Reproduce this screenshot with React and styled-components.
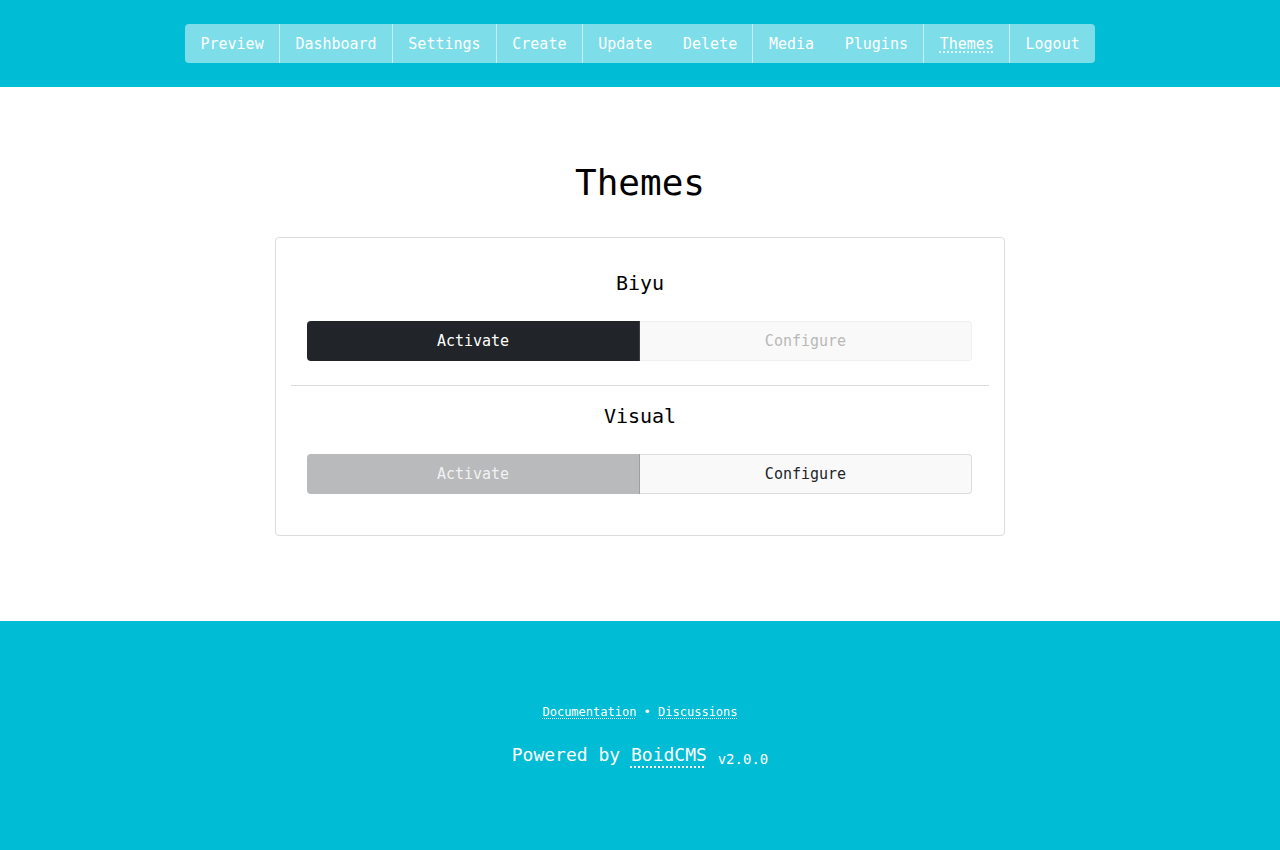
import React from 'react';
import styled, { createGlobalStyle } from 'styled-components';

const GlobalStyle = createGlobalStyle`
  html, body {
    margin: 0;
    padding: 0;
    background: #ffffff;
    font-family: "DejaVu Sans Mono", "Liberation Mono", monospace;
  }
`;

const navGroups = [
  ['Preview'],
  ['Dashboard'],
  ['Settings'],
  ['Create'],
  ['Update', 'Delete'],
  ['Media', 'Plugins'],
  ['Themes'],
  ['Logout'],
];

const themes = [
  { name: 'Biyu', active: true },
  { name: 'Visual', active: false },
];

function App() {
  return (
    <>
      <GlobalStyle />
      <Header>
        <Nav>
          {navGroups.map((group, i) => (
            <NavGroup key={i} $last={i === navGroups.length - 1}>
              {group.map((item) => (
                <NavLink key={item} href="#" $current={item === 'Themes'}>
                  {item}
                </NavLink>
              ))}
            </NavGroup>
          ))}
        </Nav>
      </Header>
      <Main>
        <Title>Themes</Title>
        <Card>
          {themes.map((theme, i) => (
            <React.Fragment key={theme.name}>
              {i > 0 && <Divider />}
              <ThemeItem>
                <ThemeName>{theme.name}</ThemeName>
                <ButtonGroup>
                  <ActivateButton $disabled={!theme.active}>Activate</ActivateButton>
                  <ConfigureButton $disabled={theme.active}>Configure</ConfigureButton>
                </ButtonGroup>
              </ThemeItem>
            </React.Fragment>
          ))}
        </Card>
      </Main>
      <Footer>
        <FooterLinks>
          <FooterLink href="#">Documentation</FooterLink>
          <span> • </span>
          <FooterLink href="#">Discussions</FooterLink>
        </FooterLinks>
        <Powered>
          Powered by <PoweredLink href="#">BoidCMS</PoweredLink> <Version>v2.0.0</Version>
        </Powered>
      </Footer>
    </>
  );
}

export default App;

const Header = styled.header`
  background: #00bcd4;
  padding: 24px 0;
  display: flex;
  justify-content: center;
`;

const Nav = styled.nav`
  display: flex;
  background: rgba(255, 255, 255, 0.49);
  border-radius: 4px;
  height: 39px;
`;

const NavGroup = styled.div`
  display: flex;
  border-right: ${({ $last }) => ($last ? 'none' : '1px solid rgba(255, 255, 255, 0.55)')};
`;

const NavLink = styled.a`
  display: flex;
  align-items: center;
  padding: 0 15.25px 0 15.45px;
  color: #ffffff;
  font-size: 15px;
  text-decoration: ${({ $current }) => ($current ? 'underline dotted' : 'none')};
  text-underline-offset: 3px;
`;

const Main = styled.main`
  padding: 74px 0 85px;
  display: flex;
  flex-direction: column;
  align-items: center;
`;

const Title = styled.h1`
  margin: 0 0 32px;
  font-size: 36px;
  font-weight: 400;
  line-height: 44px;
  color: #000000;
`;

const Card = styled.div`
  width: 730px;
  box-sizing: border-box;
  border: 1px solid #dcdcdc;
  border-radius: 4px;
  padding: 15px 15px 17px;
`;

const Divider = styled.hr`
  margin: 0;
  border: none;
  border-top: 1px solid #dcdcdc;
`;

const ThemeItem = styled.div`
  padding: 18px 16px 24px 16px;
  display: flex;
  flex-direction: column;
  align-items: stretch;
`;

const ThemeName = styled.h3`
  margin: 0 0 26px;
  font-size: 20px;
  font-weight: 400;
  line-height: 24px;
  text-align: center;
  color: #000000;
`;

const ButtonGroup = styled.div`
  display: grid;
  grid-template-columns: 333px 332px;
  height: 40px;
`;

const BaseButton = styled.button`
  font-family: "DejaVu Sans Mono", "Liberation Mono", monospace;
  font-size: 15px;
  box-sizing: border-box;
  margin: 0;
  cursor: pointer;
`;

const ActivateButton = styled(BaseButton)`
  background: ${({ $disabled }) => ($disabled ? '#b9babc' : '#212529')};
  color: ${({ $disabled }) => ($disabled ? '#f2f2f2' : '#ffffff')};
  border: none;
  border-right: 1px solid ${({ $disabled }) => ($disabled ? '#9d9ea0' : '#3a3e42')};
  border-radius: 4px 0 0 4px;
`;

const ConfigureButton = styled(BaseButton)`
  background: #f9f9f9;
  color: ${({ $disabled }) => ($disabled ? '#b8b8b8' : '#212529')};
  border: 1px solid ${({ $disabled }) => ($disabled ? '#f0f0f0' : '#dcdcdc')};
  border-left: none;
  border-radius: 0 4px 4px 0;
`;

const Footer = styled.footer`
  background: #00bcd4;
  color: #ffffff;
  padding: 83px 0 80px;
  display: flex;
  flex-direction: column;
  align-items: center;
  min-height: 229px;
  box-sizing: border-box;
`;

const FooterLinks = styled.div`
  font-size: 12px;
  line-height: 16px;
`;

const FooterLink = styled.a`
  color: #ffffff;
  text-decoration: underline dotted;
  text-underline-offset: 2px;
`;

const Powered = styled.p`
  margin: 24px 0 0;
  font-size: 18px;
  line-height: 22px;
`;

const PoweredLink = styled.a`
  color: #ffffff;
  text-decoration: underline dotted;
  text-underline-offset: 6px;
`;

const Version = styled.small`
  font-size: 14px;
  vertical-align: -3px;
`;
